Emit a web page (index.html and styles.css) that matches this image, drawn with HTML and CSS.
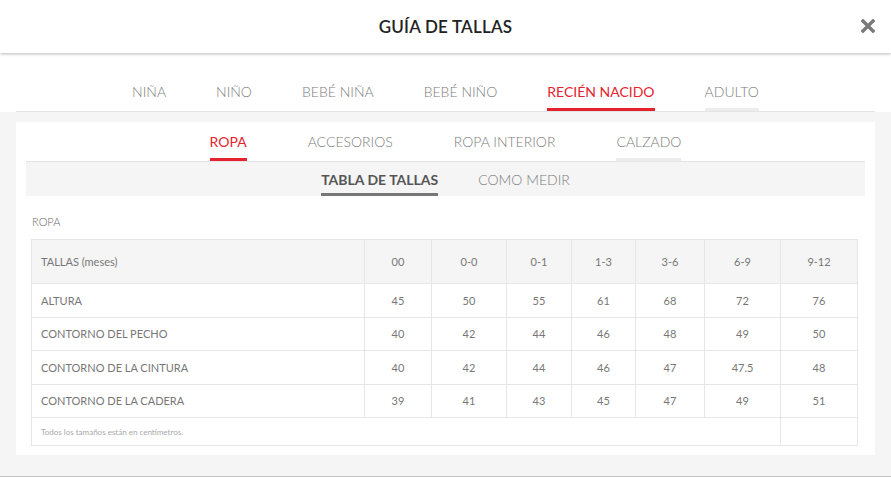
FILE: index.html
```html
<!DOCTYPE html>
<html lang="es">
<head>
    <meta charset="UTF-8">
    <title>Guía de tallas</title>
    <link rel="stylesheet" href="styles.css">
</head>
<body>
<div class="modal">
    <header class="modal-head">
        <h1>GUÍA DE TALLAS</h1>
        <span class="close-btn" title="Cerrar">
            <svg width="14" height="14" viewBox="0 0 14 14">
                <path d="M2 2 L12 12 M12 2 L2 12" stroke="#7a7a7a" stroke-width="3.4" stroke-linecap="square"/>
            </svg>
        </span>
    </header>
    <nav class="tabs main-tabs">
        <a href="#">NIÑA</a>
        <a href="#">NIÑO</a>
        <a href="#">BEBÉ NIÑA</a>
        <a href="#">BEBÉ NIÑO</a>
        <a href="#" class="active">RECIÉN NACIDO</a>
        <a href="#" class="muted-line">ADULTO</a>
    </nav>
    <section class="content">
        <div class="card">
            <nav class="tabs cat-tabs">
                <a href="#" class="active">ROPA</a>
                <a href="#">ACCESORIOS</a>
                <a href="#">ROPA INTERIOR</a>
                <a href="#" class="muted-line">CALZADO</a>
            </nav>
            <div class="strip">
                <nav class="tabs view-tabs">
                    <a href="#" class="active">TABLA DE TALLAS</a>
                    <a href="#">COMO MEDIR</a>
                </nav>
            </div>
            <div class="table-wrap">
                <p class="table-title">ROPA</p>
                <table class="sizes">
                    <colgroup>
                        <col><col><col><col><col><col><col><col>
                    </colgroup>
                    <thead>
                        <tr>
                            <th>TALLAS (meses)</th>
                            <th>00</th><th>0-0</th><th>0-1</th><th>1-3</th><th>3-6</th><th>6-9</th><th>9-12</th>
                        </tr>
                    </thead>
                    <tbody>
                        <tr>
                            <td>ALTURA</td>
                            <td>45</td><td>50</td><td>55</td><td>61</td><td>68</td><td>72</td><td>76</td>
                        </tr>
                        <tr>
                            <td>CONTORNO DEL PECHO</td>
                            <td>40</td><td>42</td><td>44</td><td>46</td><td>48</td><td>49</td><td>50</td>
                        </tr>
                        <tr>
                            <td>CONTORNO DE LA CINTURA</td>
                            <td>40</td><td>42</td><td>44</td><td>46</td><td>47</td><td>47.5</td><td>48</td>
                        </tr>
                        <tr>
                            <td>CONTORNO DE LA CADERA</td>
                            <td>39</td><td>41</td><td>43</td><td>45</td><td>47</td><td>49</td><td>51</td>
                        </tr>
                    </tbody>
                    <tfoot>
                        <tr>
                            <td colspan="7" class="note">Todos los tamaños están en centímetros.</td>
                            <td></td>
                        </tr>
                    </tfoot>
                </table>
            </div>
        </div>
    </section>
</div>
</body>
</html>
```

FILE: styles.css
```css
* { box-sizing: border-box; }
body {
    margin: 0;
    font-family: Lato, "Open Sans", sans-serif;
    background: #fff;
    color: #777;
}
.modal {
    height: 477px;
    display: flex;
    flex-direction: column;
    overflow: hidden;
}
.modal-head {
    height: 53px;
    flex: none;
    display: flex;
    align-items: center;
    justify-content: center;
    position: relative;
    background: #fff;
    box-shadow: 0 1px 3px rgba(0,0,0,0.28);
    z-index: 1;
}
.modal-head h1 {
    margin: 0;
    font-size: 17px;
    font-weight: 600;
    color: #222;
    letter-spacing: 0.2px;
}
.close-btn {
    position: absolute;
    right: 16px;
    top: 19px;
    width: 14px;
    height: 14px;
    cursor: pointer;
}
.close-btn svg { display: block; }

/* tabs */
.tabs {
    display: flex;
    justify-content: center;
}
.tabs a {
    display: block;
    text-decoration: none;
    color: #7c7c7c;
    font-size: 14px;
    font-weight: 300;
    line-height: 20px;
    border-bottom: 3px solid transparent;
}
.tabs a.active {
    color: #e5232e;
    font-weight: 400;
    border-bottom-color: #e5232e;
}
.tabs a.muted-line {
    border-bottom-color: #ececec;
}
.main-tabs {
    margin: 0 16px;
    padding-top: 29px;
    gap: 50px;
    border-bottom: 1px solid #e4e4e4;
}
.main-tabs a {
    padding-bottom: 6px;
}
.content {
    flex: 1;
    background: #f5f5f5;
    padding: 10px 16px 21px;
    border-bottom: 1px solid #c4c4c4;
}
.card {
    background: #fff;
}
.cat-tabs {
    padding-top: 10px;
    gap: 61px;
}
.cat-tabs a {
    padding-bottom: 6px;
}
.strip {
    margin: 0 10px;
    background: #f5f5f5;
    border-top: 1px solid #e4e4e4;
}
.view-tabs {
    padding-top: 8px;
    gap: 40px;
}
.view-tabs a {
    padding-bottom: 3px;
}
.view-tabs a.active {
    color: #555;
    font-weight: 700;
    border-bottom-color: #777;
}

/* table */
.table-wrap {
    padding: 19px 15px 9px;
}
.table-title {
    margin: 0 0 10px 1px;
    font-size: 11px;
    font-weight: 300;
    line-height: 14px;
    color: #666;
}
.sizes {
    width: 826px;
    border-collapse: collapse;
    table-layout: fixed;
    font-size: 11px;
    color: #777;
}
.sizes col:nth-child(1) { width: 333px; }
.sizes col:nth-child(2) { width: 67px; }
.sizes col:nth-child(3) { width: 75px; }
.sizes col:nth-child(4) { width: 65px; }
.sizes col:nth-child(5) { width: 64px; }
.sizes col:nth-child(6) { width: 69px; }
.sizes col:nth-child(7) { width: 76px; }
.sizes col:nth-child(8) { width: 77px; }
.sizes th, .sizes td {
    border: 1px solid #e6e6e6;
    text-align: center;
    padding: 0;
    font-weight: 400;
}
.sizes th:first-child, .sizes td:first-child {
    text-align: left;
    padding-left: 9px;
}
.sizes thead th {
    background: #f5f5f5;
    height: 44px;
}
.sizes tbody td {
    height: 33.5px;
}
.sizes tfoot td {
    height: 28px;
}
.sizes td.note {
    font-size: 8px;
    color: #a8a8a8;
}
```
